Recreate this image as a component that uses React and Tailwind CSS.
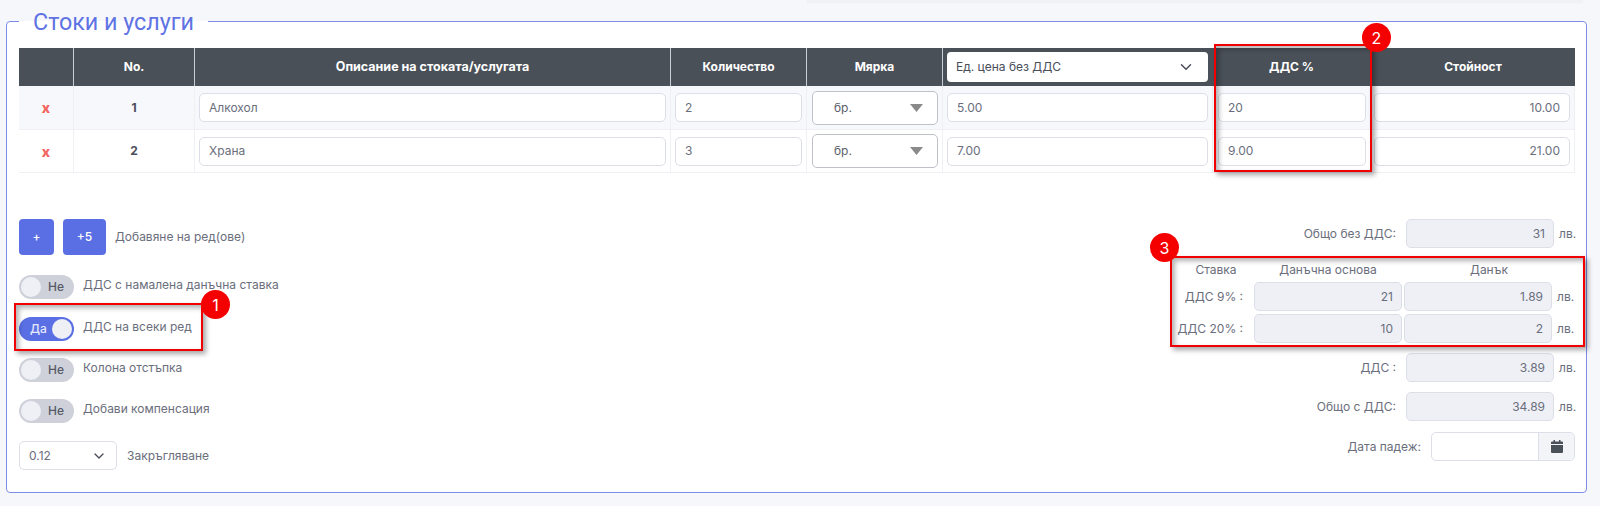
import React from "react";
import { ChevronDown } from "lucide-react";

const rows = [
  { no: 1, name: "Алкохол", qty: "2", price: "5.00", vat: "20", total: "10.00", alt: true },
  { no: 2, name: "Храна", qty: "3", price: "7.00", vat: "9.00", total: "21.00", alt: false },
];

const Field = ({ children, className = "" }) => (
  <div className={`flex h-[29px] items-center rounded-[5px] border border-[#dcdfe8] bg-white px-[9px] text-[12px] text-[#6a6e7c] ${className}`}>
    {children}
  </div>
);

const ReadOnly = ({ children, className = "" }) => (
  <div className={`flex h-[29px] items-center justify-end rounded-[5px] border border-[#dcdfe8] bg-[#eef0f6] px-[8px] text-[12px] text-[#6a6e7c] ${className}`}>
    {children}
  </div>
);

const Toggle = ({ on, label, className = "" }) => (
  <div className={`flex items-start ${className}`}>
    {on ? (
      <div className="flex h-[24px] w-[55px] items-center justify-between rounded-full bg-[#5a6fe3] pl-[11px] pr-[2px] text-[12px] font-medium text-[#e4e8fb]">
        <span>Да</span>
        <span className="h-[20px] w-[20px] rounded-full bg-[#eef0f6]"></span>
      </div>
    ) : (
      <div className="flex h-[24px] w-[55px] items-center justify-between rounded-full bg-[#ced1d9] pl-[2px] pr-[10px] text-[12px] font-medium text-[#565a66]">
        <span className="h-[20px] w-[20px] rounded-full bg-[#eef0f6]"></span>
        <span>Не</span>
      </div>
    )}
    <span className="ml-[9px] text-[12px] leading-[20px] text-[#6a6e7c]">{label}</span>
  </div>
);

const TotalRow = ({ label, value, className = "" }) => (
  <div className={`flex items-center ${className}`}>
    <span className="mr-[10px] text-[12px] text-[#6a6e7c]">{label}</span>
    <ReadOnly className="w-[148px]">{value}</ReadOnly>
    <span className="ml-[5px] w-[17px] text-[12px] text-[#6a6e7c]">лв.</span>
  </div>
);

const VatRow = ({ label, base, tax, className = "" }) => (
  <div className={`flex items-center ${className}`}>
    <span className="mr-[11px] w-[80px] text-right text-[12px] text-[#6a6e7c]">{label}</span>
    <ReadOnly className="w-[148px]">{base}</ReadOnly>
    <ReadOnly className="ml-[2px] w-[148px]">{tax}</ReadOnly>
    <span className="ml-[5px] w-[19px] text-[12px] text-[#6a6e7c]">лв.</span>
  </div>
);

const Head = ({ children, className = "" }) => (
  <div className={`flex items-center justify-center border-l border-[#c9ccd3] text-[12px] font-bold text-white ${className}`}>
    {children}
  </div>
);

const Cell = ({ children, alt, className = "" }) => (
  <div className={`flex items-center border-b border-l border-[#eff0f4] pt-[1px] ${alt ? "bg-[#f7f8fb]" : "bg-white"} ${className}`}>
    {children}
  </div>
);

const Mark = ({ className = "" }) => (
  <div className={`pointer-events-none absolute border-[2px] border-[#f00000] shadow-[3px_3px_5px_rgba(0,0,0,0.35),inset_3px_3px_5px_rgba(0,0,0,0.3)] ${className}`}></div>
);

const Badge = ({ n, className = "" }) => (
  <div className={`absolute flex h-[29px] w-[29px] items-center justify-center rounded-full bg-[#f40000] text-[16px] text-white ${className}`}>
    {n}
  </div>
);

export default function App() {
  return (
    <div className="relative h-[506px] w-[1600px] overflow-hidden bg-[#f6f7fb] pl-[6px] pt-[6px] font-['Inter',sans-serif]">
      <div className="absolute right-[17px] top-0 h-[2px] w-[776px] bg-[#f0f1f6] shadow-[0_1px_2px_rgba(0,0,0,0.03)]"></div>

      <fieldset className="h-[487px] w-[1581px] rounded-[4px] border border-[#7c8ce8] bg-white pl-[12px] pr-[10px]">
        <legend className="h-[30px] px-[14px] font-['Roboto',sans-serif] text-[23.3px] leading-[32px] text-[#5f73e4]">
          Стоки и услуги
        </legend>

        {/* table */}
        <div className="mt-[12px] w-[1556px]">
          <div className="grid h-[38px] grid-cols-[54px_121px_476px_136px_136px_270px_159px_204px] bg-[#4a5058]">
            <Head className="border-l-0"></Head>
            <Head>No.</Head>
            <Head><span className="text-[12.5px]">Описание на стоката/услугата</span></Head>
            <Head>Количество</Head>
            <Head>Мярка</Head>
            <Head className="px-[4px]">
              <div className="flex h-[30px] w-full items-center justify-between rounded-[4px] bg-white pl-[9px] pr-[13px] text-[12px] font-normal text-[#4a4e5a]">
                <span>Ед. цена без ДДС</span>
                <ChevronDown size={18} strokeWidth={2} />
              </div>
            </Head>
            <div className="flex items-center justify-center text-[12px] font-bold text-white">ДДС %</div>
            <div className="flex items-center justify-center text-[12px] font-bold text-white">Стойност</div>
          </div>

          {rows.map((r) => (
            <div key={r.no} className="grid h-[43.5px] grid-cols-[54px_121px_476px_136px_136px_270px_159px_204px]">
              <Cell alt={r.alt} className="justify-center border-l-0 text-[14px] font-extrabold text-[#f4655f]">x</Cell>
              <Cell alt={r.alt} className="justify-center text-[12px] font-bold text-[#4a4e5a]">{r.no}</Cell>
              <Cell alt={r.alt} className="px-[4px]"><Field className="w-full">{r.name}</Field></Cell>
              <Cell alt={r.alt} className="px-[4px]"><Field className="w-full">{r.qty}</Field></Cell>
              <Cell alt={r.alt} className="pl-[5px] pr-[4px]">
                <div className="flex h-[34px] w-full items-center justify-between rounded-[5px] border border-[#bfc1c8] bg-white pl-[21px] pr-[14px] text-[12px] text-[#5a5e6a]">
                  <span>бр.</span>
                  <svg width="13" height="8" viewBox="0 0 13 8"><path d="M0 0h13L6.5 8z" fill="#8a8a8a" /></svg>
                </div>
              </Cell>
              <Cell alt={r.alt} className="px-[4px]"><Field className="w-full">{r.price}</Field></Cell>
              <Cell alt={r.alt} className="px-[5px]"><Field className="w-full">{r.vat}</Field></Cell>
              <Cell alt={r.alt} className="border-r pl-[2px] pr-[4px]"><Field className="w-full justify-end">{r.total}</Field></Cell>
            </div>
          ))}
        </div>

        <div className="mt-[46px] flex justify-between">
          {/* left options */}
          <div>
            <div className="flex items-center">
              <button className="h-[36px] w-[35px] rounded-[4px] bg-[#5a6fe3] text-[12px] font-medium text-white">+</button>
              <button className="ml-[9px] h-[36px] w-[43px] rounded-[4px] bg-[#5a6fe3] text-[12px] font-medium text-white">+5</button>
              <span className="ml-[9px] text-[12px] text-[#6a6e7c]">Добавяне на ред(ове)</span>
            </div>
            <Toggle className="mt-[20px]" label="ДДС с намалена данъчна ставка" />
            <Toggle className="mt-[18px]" on label="ДДС на всеки ред" />
            <Toggle className="mt-[17px]" label="Колона отстъпка" />
            <Toggle className="mt-[17px]" label="Добави компенсация" />
            <div className="mt-[18px] flex items-center">
              <Field className="w-[98px] justify-between">
                <span>0.12</span>
                <ChevronDown size={16} strokeWidth={2} className="text-[#4a4e5a]" />
              </Field>
              <span className="ml-[10px] text-[12px] text-[#6a6e7c]">Закръгляване</span>
            </div>
          </div>

          {/* right totals */}
          <div className="flex flex-col items-end">
            <TotalRow label="Общо без ДДС:" value="31" />
            <div className="mt-[14px] flex items-center text-[12px] leading-[15px] text-[#6a6e7c]">
              <span className="w-[80px] pl-[26px] text-center">Ставка</span>
              <span className="ml-[11px] w-[148px] text-center">Данъчна основа</span>
              <span className="ml-[2px] w-[148px] pl-[22px] text-center">Данък</span>
              <span className="ml-[5px] w-[19px]"></span>
            </div>
            <VatRow className="mt-[5px]" label="ДДС 9% :" base="21" tax="1.89" />
            <VatRow className="mt-[3px]" label="ДДС 20% :" base="10" tax="2" />
            <TotalRow className="mt-[10px]" label="ДДС :" value="3.89" />
            <TotalRow className="mt-[10px]" label="Общо с ДДС:" value="34.89" />
            <div className="mr-[1px] mt-[11px] flex items-center">
              <span className="mr-[10px] text-[12px] text-[#6a6e7c]">Дата падеж:</span>
              <div className="flex h-[29px] w-[144px] rounded-[5px] border border-[#dcdfe8] bg-white">
                <div className="flex-1"></div>
                <div className="flex w-[36px] items-center justify-center rounded-r-[5px] border-l border-[#dcdfe8] bg-[#f3f4f8]">
                  <svg width="12" height="13" viewBox="0 0 12 13" fill="#4a5058">
                    <path d="M2.5 0h1.5v1.5h4V0h1.5v1.5H11a1 1 0 0 1 1 1V4H0V2.5a1 1 0 0 1 1-1h1.5zM0 5h12v7a1 1 0 0 1-1 1H1a1 1 0 0 1-1-1z" />
                  </svg>
                </div>
              </div>
            </div>
          </div>
        </div>
      </fieldset>

      {/* annotations drawn over the screenshot */}
      <Mark className="left-[14px] top-[303px] h-[48px] w-[189px]" />
      <Mark className="left-[1214px] top-[44px] h-[128px] w-[158px]" />
      <Mark className="left-[1170px] top-[256px] h-[91px] w-[415px]" />
      <Badge n="1" className="left-[201px] top-[290px]" />
      <Badge n="2" className="left-[1362px] top-[23px]" />
      <Badge n="3" className="left-[1150px] top-[233px]" />
    </div>
  );
}
